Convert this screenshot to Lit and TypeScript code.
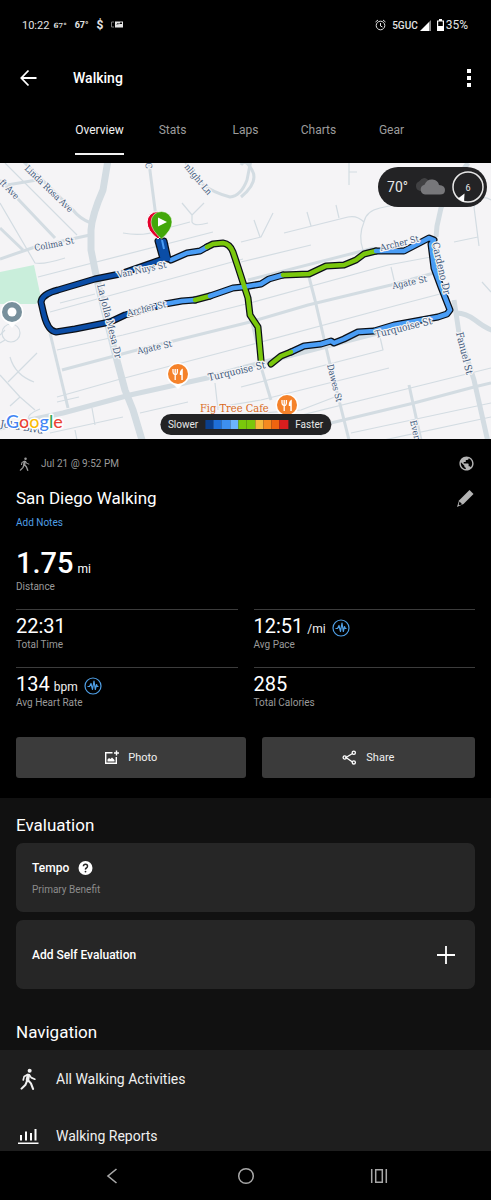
import { LitElement, html, svg, css } from "lit";
import { customElement, property, state } from "lit/decorators.js";
import { classMap } from "lit/directives/class-map.js";

const walker = svg`<circle cx="13.800" cy="3.100" r="2.200" fill="currentColor"/>
  <g fill="none" stroke="currentColor" stroke-linecap="round" stroke-linejoin="round">
    <path stroke-width="3.800" d="M12.300 8.200l-.9 5"/>
    <path stroke-width="1.800" d="M11.600 7.200 7.800 9.200 6.800 13M13.500 7.500l2 3 4 1.700"/>
    <path stroke-width="2.300" d="M11.200 13.500 9.300 18.200 5 22.500M12 13.300l3.200 3.500 2.300 6"/>
  </g>`;

@customElement("route-map")
export class RouteMap extends LitElement {
  static styles = css`
    :host { display: block; position: relative; overflow: hidden; background: #f5f4f6; }
    .map { display: block; width: 100%; height: auto; }
    .road { fill: none; stroke: #d3dce2; stroke-linejoin: round; }
    .w1 { stroke-width: 1.2; }
    .w3 { stroke-width: 3; }
    .w5 { stroke-width: 5; }
    .w7 { stroke-width: 7; }
    .casing { fill: none; stroke: #0b1018; stroke-width: 7; stroke-linejoin: round; stroke-linecap: round; }
    .route { fill: none; stroke-width: 4.5; stroke-linejoin: round; stroke-linecap: round; }
    .streak { fill: none; stroke: #4a9df5; stroke-width: 2; }
    .dark { stroke: #0b4da6; }
    .light { stroke: #4a9df5; }
    .green { stroke: #7ac70c; }
    .street { font-family: "DejaVu Serif Condensed", "DejaVu Serif", serif; fill: #40587a; stroke: #f5f4f6; stroke-width: 2.5; paint-order: stroke; stroke-linejoin: round; }
    .s9 { font-size: 9px; }
    .s10 { font-size: 10px; }
    .s11 { font-size: 11px; }
    .place { fill: #d96a1c; }
    .google { font: 500 18px Lato, "Open Sans", sans-serif; stroke: #fff; stroke-width: 3; paint-order: stroke; stroke-linejoin: round; }
    .weather, .legend { position: absolute; display: flex; align-items: center; background: #232325; color: #e8e8e8; }
    .weather { top: 4px; right: 4px; height: 40px; padding: 0 3px 0 9px; border-radius: 20px; gap: 6px; font-size: 14px; }
    .legend { left: 50%; bottom: 4px; transform: translateX(-50%); height: 21px; padding: 0 8px; border-radius: 11px; gap: 7px; font-size: 10px; }
    .scale { display: flex; width: 83px; height: 9px; }
    .step { flex: 1; }
  `;

  private roads: [string, string][] = [
    ["w7", "M108 160 103 190Q92 215 91 230V250L95 270 100 293 115 353 125 390 133 410 142 440"],
    ["w5", "M0 428 30 420 63 413 130 395 207 378 242 368 385 331 450 312"],
    ["w5", "M454 313Q465 312 475 320T494 331"],
    ["w5", "M454 300 459 333 474 380 488 442"],
    ["w3", "M62 370 137 350 250 322 308 305 391 285 434 273"],
    ["w3", "M50 333 68 408"],
    ["w3", "M22 160 73 210Q80 219 91 223"],
    ["w3", "M0 259 35 247 90 235"],
    ["w3", "M0 180 55 238M7 185 37 180M0 228 23 250"],
    ["w3", "M149 163 156 217M309 277 315 300 329 360 349 440M261 367 271 400M250 315 261 360"],
    ["w3", "M185 160Q195 188 230 197Q241 196 247 180L251 160"],
    ["w5", "M436 237 437 226 441 208Q450 188 468 163"],
    ["w3", "M248 280 374 248M409 385 421 440M280 433 331 423 414 403 474 387 491 383M320 435 331 423"],
    ["w3", "M241 197Q259 182 252 170T241 165"],
    ["w1", "M5 163 77 235M0 203 35 263Q43 265 65 258M38 277 213 232M123 233Q143 237 160 230L190 222"],
    ["w1", "M182 203 192 215 204 203M192 215V222Q194 227 208 223M241 242 261 237 273 213M254 220 260 237"],
    ["w1", "M284 233 348 217Q357 215 364 222Q366 211 380 208L440 195M364 222Q358 236 363 250M336 205 339 218M307 212 311 226"],
    ["w1", "M241 262 311 245M349 163V185M349 172H357M454 242 478 237M474 207 479 246M474 207Q480 193 491 200M482 282 491 292"],
    ["w1", "M57 350 123 335 250 303 388 265 431 257M391 267 395 284M50 312 243 259M57 397 117 380 250 345 398 305 440 294"],
    ["w1", "M57 402 79 397M241 387 383 350 380 337M140 413 188 402M92 408 95 425M50 433 123 417M75 430 77 440"],
    ["w1", "M200 410 261 400 389 368M200 418 301 410 340 395M351 433 491 403M384 440 491 417M215 383 218 410M241 430 491 368"],
    ["w1", "M0 375 20 397 35 410M10 357Q15 375 34 382M37 353 8 382M20 397 10 406M40 409Q27 414 28 420M0 335 5 330"],
    ["w1", "M2 333a9 9 0 1 0 18 0a9 9 0 1 0-18 0M5 340 0 343M95 294 60 303M168 303 228 288"],
  ];

  private route: [string, string][] = [
    ["light", "M207 247 200 251 187 253 171 260"],
    ["dark", "M158 241 163 259 120 274 95 279 58 290Q42 294 41 302L44 315Q48 331 56 332L75 329 110 322 125 315 165 304"],
    ["dark", "M164 241 168 259H164L160 241"],
    ["light", "M165 304 182 301 195 300"],
    ["green", "M195 300 210 296"],
    ["light", "M210 296 233 288 243 287 261 284 269 279 283 275"],
    ["green", "M283 275 309 274 326 266 344 265 356 260 364 254 376 251"],
    ["light", "M376 251 404 251 429 238 434 240 431 244 434 268 441 287 450 310 447 314 438 317 394 325 374 331 358 332 344 339 334 343 331 341 321 344 304 346 291 352"],
    ["green", "M291 352 281 356 271 364"],
    ["green", "M261 360 258 327 250 315 248 298 238 267 233 252Q230 244 223 243L213 244 207 247"],
  ];

  private labels: [string, number, number, number, string][] = [
    ["Linda Rosa Ave", 24, 169, 44, "s9"],
    ["ft Ave", -1, 183, 46, "s9"],
    ["nlight Ln", 184, 167, 50, "s9"],
    ["C", 145, 163, 80, "s9"],
    ["Colima St", 35, 251, -11, "s9"],
    ["Van Nuys St", 118, 278, -12, "s9"],
    ["La Jolla Mesa Dr", 97, 285, 76, "s10"],
    ["Archer St", 128, 316, -13, "s9"],
    ["Agate St", 138, 354, -12, "s9"],
    ["Turquoise St", 209, 381, -13, "s10"],
    ["Turquoise St", 376, 338, -14, "s10"],
    ["Archer St", 381, 251, -14, "s9"],
    ["Agate St", 393, 289, -12, "s9"],
    ["Cardeno Dr", 432, 243, 77, "s10"],
    ["Dawes St", 327, 365, 76, "s9"],
    ["Fanuel St", 456, 333, 76, "s10"],
    ["Ever", 410, 421, 77, "s9"],
    ["Jolla Blvd", 0, 427, 9, "s10"],
  ];

  private steps = ["#0b3f8c", "#1f6fd8", "#3d8ff0", "#6cb4fb", "#7ac70c", "#7ac70c", "#f5b93c", "#f58a1f", "#ee6410", "#d81e1e"];

  private food(x: number, y: number) {
    return svg`<g transform="translate(${x} ${y})">
      <path fill="#fff" d="M0 15 4 11A11.500 11.500 0 1 0-4 11z"/><circle r="10" fill="#f5822a"/>
      <path fill="none" stroke="#fff" stroke-width="1.300" d="M-5-5v3q0 2 2 2.500T-.6-2v-3M-2.800-5V6"/>
      <path fill="#fff" d="M4.800-5.500V6H3.300V1H1.800q-.5-5 3-6.500z"/></g>`;
  }

  render() {
    return html`
      <svg class="map" viewBox="0 163 491 276" role="img" aria-label="Route map">
        <path fill="#c9eedb" d="M0 272 34 265 41 298 36 304H0z" />
        ${this.roads.map(([w, d]) => svg`<path class="road ${w}" d=${d} />`)}
        ${this.route.map(([, d]) => svg`<path class="casing" d=${d} />`)}
        ${this.route.map(([c, d]) => svg`<path class="route ${c}" d=${d} />`)}
        <path class="streak" d="M162 240 164 249" />
        ${this.labels.map(([t, x, y, a, s]) => svg`<text class="street ${s}" transform="translate(${x} ${y}) rotate(${a})">${t}</text>`)}
        <text class="street s11 place" x="200" y="412">Fig Tree Cafe</text>
        ${this.food(178, 374)} ${this.food(287, 405)}
        <path fill="#fff" d="M12 328 16 323A11.500 11.500 0 1 0 8 323z" />
        <circle cx="12" cy="312" r="10" fill="#78909c" /><circle cx="12" cy="312" r="4.500" fill="#fff" />
        <path fill="#e4002b" stroke="#fff" stroke-width="1" d="M158 239Q147 231 147 222A10.500 10.500 0 1 1 168 222Q168 230 158 239z" />
        <path fill="#43a80a" stroke="#fff" stroke-width=".5" d="M161.500 239Q151 230 151 222A10.500 10.500 0 1 1 172 222Q172 230 161.500 239z" />
        <path fill="#fff" d="M158 217.500 167 222 158 226.500z" />
        <text class="google" x="6" y="428"><tspan fill="#4285f4">G</tspan><tspan fill="#ea4335">o</tspan><tspan fill="#fbbc05">o</tspan><tspan fill="#4285f4">g</tspan><tspan fill="#34a853">l</tspan><tspan fill="#ea4335">e</tspan></text>
      </svg>
      <div class="weather">
        <span>70°</span>
        <svg width="32" height="20" viewBox="0 0 32 20" aria-hidden="true">
          <path fill="#414143" d="M6 14a5 5 0 0 1-1-9.500Q9-1 13 2t3 6l-4 6z" />
          <path fill="#77777a" d="M11 17.500a5 5 0 0 1-.5-9.800Q13 2 18.500 2.500T25 8q6 .5 6 5t-5 4.500z" />
        </svg>
        <svg width="32" height="32" viewBox="0 0 32 32" role="img" aria-label="Wind 6">
          <circle cx="16" cy="16" r="15" fill="none" stroke="#e8e8e8" stroke-width="1.500" />
          <path fill="#fff" d="M6 27.500 12.500 22.500 12 31z" />
          <text x="16" y="19.500" text-anchor="middle" font-size="9" fill="#e8e8e8">6</text>
        </svg>
      </div>
      <div class="legend">
        <span>Slower</span>
        <div class="scale">${this.steps.map((c) => html`<span class="step" style="background:${c}"></span>`)}</div>
        <span>Faster</span>
      </div>`;
  }
}

@customElement("stat-cell")
export class StatCell extends LitElement {
  @property() value = "";
  @property() unit = "";
  @property() label = "";
  @property({ type: Boolean }) pulse = false;

  static styles = css`
    :host { display: block; border-top: 1px solid #3c3c3c; height: 57px; padding-top: 4px; box-sizing: border-box; }
    .line { display: flex; align-items: baseline; gap: 4px; height: 24px; line-height: 24px; }
    .value { font-size: 20px; color: #fff; }
    .unit { font-size: 12px; color: #f0f0f0; }
    .pulse { align-self: center; margin: 3px 0 0 2px; }
    .label { margin-top: 1px; font-size: 10px; line-height: 12px; color: #9a9a9a; }
  `;

  render() {
    return html`
      <div class="line">
        <span class="value">${this.value}</span>
        ${this.unit ? html`<span class="unit">${this.unit}</span>` : ""}
        ${this.pulse
          ? html`<svg class="pulse" width="18" height="18" viewBox="0 0 18 18" fill="none" stroke="#4f9fe6" aria-hidden="true">
              <circle cx="9" cy="9" r="8" stroke-width="1.200" />
              <path stroke-width="1.200" stroke-linejoin="round" d="M3.500 9.500H5.500L7 6.500 8.500 12.500 10 4 11.300 12.500 12.500 7.500 13.300 9.500H14.500" />
            </svg>`
          : ""}
      </div>
      <div class="label">${this.label}</div>`;
  }
}

@customElement("app-root")
export class AppRoot extends LitElement {
  @state() private tab = "Overview";

  static styles = css`
    :host { display: flex; flex-direction: column; height: 100vh; background: #000; color: #fff; font-family: Roboto, sans-serif; font-size: 12px; }
    button { font: inherit; color: inherit; background: none; border: 0; padding: 0; margin: 0; cursor: pointer; }
    a { color: inherit; text-decoration: none; }
    svg { display: block; flex: none; }
    h1, h2, h3, p { margin: 0; font-weight: 400; }
    .status { display: flex; align-items: center; justify-content: space-between; height: 50px; padding: 0 23px 0 22px; color: #e4e4e4; }
    .group { display: flex; align-items: center; gap: 8px; }
    .signals { gap: 6px; }
    .tight { gap: 2px; }
    .clock { font-size: 11px; margin-right: 2px; }
    .tiny { font-family: "DejaVu Serif", serif; font-weight: 700; font-size: 7px; }
    .small { font-weight: 700; font-size: 9px; }
    .dollar { font-weight: 700; font-size: 12px; }
    .network { font-size: 10px; font-weight: 500; }
    .bar { display: flex; align-items: center; height: 56px; padding: 0 19px; }
    .title { flex: 1; margin-left: 34px; font-size: 14px; font-weight: 500; }
    .tabs { display: flex; height: 57px; padding: 0 63px; }
    .tab { flex: 1; display: flex; justify-content: center; }
    .name { display: flex; align-items: center; box-sizing: border-box; height: 49px; padding-top: 1px; border-bottom: 2px solid transparent; color: #9c9c9c; }
    .on .name { color: #f2f2f2; border-color: #f2f2f2; }
    .scroll { flex: 1; min-height: 0; overflow-y: auto; scrollbar-width: none; }
    .summary { padding: 0 16px 20px; }
    .row { display: flex; align-items: center; justify-content: space-between; }
    .meta { height: 49px; font-size: 10px; color: #9a9a9a; }
    .when { display: flex; align-items: center; gap: 8px; }
    .heading { height: 20px; line-height: 20px; font-size: 17px; }
    .notes { display: block; margin-top: 9px; font-size: 10px; line-height: 12px; color: #4f9fe6; }
    .distance { margin-top: 22px; font-size: 29px; line-height: 24px; font-weight: 500; }
    .unit { font-size: 12px; font-weight: 400; margin-left: 4px; }
    .label { font-size: 10px; line-height: 12px; color: #9a9a9a; }
    .stats { display: grid; grid-template-columns: 1fr 1fr; gap: 1px 16px; margin-top: 16px; }
    .actions { display: grid; grid-template-columns: 14fr 13fr; gap: 16px; margin-top: 13px; }
    .action { display: flex; align-items: center; justify-content: center; gap: 9px; height: 41px; border-radius: 3px; background: #3b3b3b; font-size: 11px; color: #f0f0f0; }
    .lower { background: #111; }
    .section { padding: 0 16px; font-size: 17px; }
    .evaluation { padding-top: 16px; line-height: 22px; margin-bottom: 7px; }
    .cards { display: grid; gap: 8px; padding: 0 16px; }
    .card { box-sizing: border-box; height: 69px; padding: 0 16px; border-radius: 7px; background: #262626; width: 100%; text-align: left; }
    .tempo { padding-top: 16px; }
    .strong { font-size: 12px; font-weight: 500; }
    .name-line { display: flex; align-items: center; gap: 8px; height: 17px; }
    .benefit { margin-top: 8px; color: #8c8c8c; }
    .navigation { padding-top: 32px; line-height: 22px; margin-bottom: 7px; }
    .links { background: #1e1e1e; }
    .link { display: flex; align-items: center; height: 57px; padding: 0 16px; gap: 16px; font-size: 14px; color: #f0f0f0; }
    .system { display: flex; height: 49px; padding: 0 45px; color: #a8a8a8; flex: none; }
    .key { flex: 1; display: flex; align-items: center; justify-content: center; }
  `;

  render() {
    return html`
      <header>
        <div class="status">
          <div class="group">
            <span class="group tight"><span class="clock">10:22</span><span class="tiny">67°</span></span>
            <span class="small">67°</span><span class="dollar">$</span>
            <svg width="12" height="8" viewBox="0 0 12 8"><path fill="none" stroke="#777" d="M3 1H.5V6H3" /><path fill="#e4e4e4" d="M4 .5h8v6H4z" /><path fill="#000" d="M5 3.500 7 2l1 1 2-2 1 1v1L9 3z" /></svg>
          </div>
          <div class="group signals">
            <svg width="11" height="12" viewBox="0 0 11 12" fill="none" stroke="#e4e4e4"><circle cx="5.500" cy="6.500" r="4.300" /><path d="M5.500 4v3l2 1M.5 3 3 1M10.500 3 8 1" /></svg>
            <span class="group tight">
              <span class="network">5GUC</span>
              <svg width="11" height="11" viewBox="0 0 11 11"><path fill="#fff" d="M0 11 9 2v9z" /><path fill="#888" d="M9 2 11 0v11H9z" /></svg>
            </span>
            <span class="group tight">
              <svg width="7" height="12" viewBox="0 0 7 12"><path fill="#fff" d="M2 0h3v2H2z" /><path fill="none" stroke="#fff" stroke-width="1.200" d="M.6 2h5.800v9.400H.6z" /><path fill="#fff" d="M1 7h5v4H1z" /></svg>
              <span>35%</span>
            </span>
          </div>
        </div>
        <div class="bar">
          <button aria-label="Back"><svg width="20" height="18" viewBox="0 0 20 18" fill="none" stroke="#fff" stroke-width="1.800"><path d="M9.500 1.500 2.300 9l7.200 7.500M2 9h15.500" /></svg></button>
          <h1 class="title">Walking</h1>
          <button aria-label="More options"><svg width="6" height="20" viewBox="0 0 6 20" fill="#fff"><path d="M1 1h4v4H1zM1 8h4v4H1zM1 15h4v4H1z" /></svg></button>
        </div>
        <nav class="tabs" role="tablist">
          ${["Overview", "Stats", "Laps", "Charts", "Gear"].map((t) => html`
            <button class=${classMap({ tab: true, on: t === this.tab })} role="tab" aria-selected=${t === this.tab} @click=${() => (this.tab = t)}>
              <span class="name">${t}</span>
            </button>`)}
        </nav>
      </header>
      <main class="scroll">
        <route-map></route-map>
        <section class="summary">
          <div class="row meta">
            <span class="when"><svg width="17" height="14" viewBox="0 0 24 24">${walker}</svg>Jul 21 @ 9:52 PM</span>
            <svg width="17" height="17" viewBox="0 0 24 24" fill="#b4b4b4"><path d="M12 2C6.480 2 2 6.480 2 12s4.480 10 10 10 10-4.480 10-10S17.520 2 12 2zm-1 17.930c-3.950-.49-7-3.850-7-7.930 0-.62.08-1.210.21-1.790L9 15v1c0 1.100.9 2 2 2v1.930zm6.900-2.540c-.26-.81-1-1.390-1.900-1.390h-1v-3c0-.55-.45-1-1-1H8v-2h2c.55 0 1-.45 1-1V7h2c1.100 0 2-.9 2-2v-.41c2.930 1.190 5 4.060 5 7.410 0 2.080-.8 3.970-2.100 5.390z" /></svg>
          </div>
          <div class="row">
            <h2 class="heading">San Diego Walking</h2>
            <button aria-label="Edit name"><svg width="19" height="19" viewBox="0 0 19 19"><path fill="#b4b4b4" d="M13.500 1 17.500 5 7.500 15 1 18 3 11.500z" /><path fill="#000" d="M3.500 12.500 6.200 15.200 3.500 16.300 2.700 15.500z" /></svg></button>
          </div>
          <a class="notes" href="#notes">Add Notes</a>
          <div class="distance">1.75<span class="unit">mi</span></div>
          <div class="label">Distance</div>
          <div class="stats">
            <stat-cell value="22:31" label="Total Time"></stat-cell>
            <stat-cell value="12:51" unit="/mi" label="Avg Pace" pulse></stat-cell>
            <stat-cell value="134" unit="bpm" label="Avg Heart Rate" pulse></stat-cell>
            <stat-cell value="285" label="Total Calories"></stat-cell>
          </div>
          <div class="actions">
            <button class="action">
              <svg width="15" height="15" viewBox="0 0 15 15" fill="none" stroke="#fff" stroke-width="1.400"><path d="M8.500 2.700H1.700V13.300H12.300V7" /><path d="M12.500.5v5M10 3h5" /><path fill="#fff" stroke="none" d="M3.500 11.500V9.500L5 8l1.500 1L8 7.500 10.500 10v1.500z" /></svg>Photo
            </button>
            <button class="action">
              <svg width="15" height="15" viewBox="0 0 15 15" fill="none" stroke="#fff" stroke-width="1.300"><path d="M10.500 3.500 4 7.500 10.500 12" /><circle cx="11.800" cy="2.700" r="1.600" /><circle cx="2.700" cy="7.500" r="1.600" /><circle cx="11.800" cy="12.400" r="1.600" /></svg>Share
            </button>
          </div>
        </section>
        <div class="lower">
          <h2 class="section evaluation">Evaluation</h2>
          <div class="cards">
            <div class="card tempo">
              <div class="name-line"><h3 class="strong">Tempo</h3>
                <button aria-label="About tempo"><svg width="16" height="16" viewBox="0 0 16 16"><circle cx="8.500" cy="8" r="7" fill="#fff" /><path fill="none" stroke="#262626" stroke-width="1.500" d="M6.400 6.300Q6.500 4.300 8.500 4.300T10.500 6.200Q10.500 7.300 9.400 8T8.500 9.700" /><circle cx="8.500" cy="11.600" r=".9" fill="#262626" /></svg></button>
              </div>
              <p class="label benefit">Primary Benefit</p>
            </div>
            <button class="card row">
              <span class="strong">Add Self Evaluation</span>
              <svg width="24" height="24" viewBox="0 0 24 24" stroke="#fff" stroke-width="1.800"><path d="M11 3v18M2 12h18" /></svg>
            </button>
          </div>
          <h2 class="section navigation">Navigation</h2>
          <nav class="links">
            <a class="link" href="#activities"><svg width="24" height="22" viewBox="0 0 24 24">${walker}</svg>All Walking Activities</a>
            <a class="link" href="#reports"><svg width="24" height="22" viewBox="0 0 24 22" fill="#fff"><path d="M2 17.500h20.500V19H2zM4 10h2v5.500H4zM9 6.500h2v9H9zM14 8h2v7.500h-2zM18.500 4h2v11.500h-2z" /></svg>Walking Reports</a>
          </nav>
        </div>
      </main>
      <nav class="system">
        <button class="key" aria-label="System back"><svg width="12" height="18" viewBox="0 0 12 18" fill="none" stroke="currentColor" stroke-width="1.600"><path d="M10.500 2 2 9l8.500 7" /></svg></button>
        <button class="key" aria-label="Home"><svg width="18" height="18" viewBox="0 0 18 18" fill="none" stroke="currentColor" stroke-width="1.500"><circle cx="9" cy="9" r="7.300" /></svg></button>
        <button class="key" aria-label="Recent apps"><svg width="18" height="18" viewBox="0 0 18 18" fill="none" stroke="currentColor" stroke-width="1.500"><path d="M1.700 2v14M16.300 2v14M5.700 2.700h6.600v12.600H5.700z" /></svg></button>
      </nav>`;
  }
}
